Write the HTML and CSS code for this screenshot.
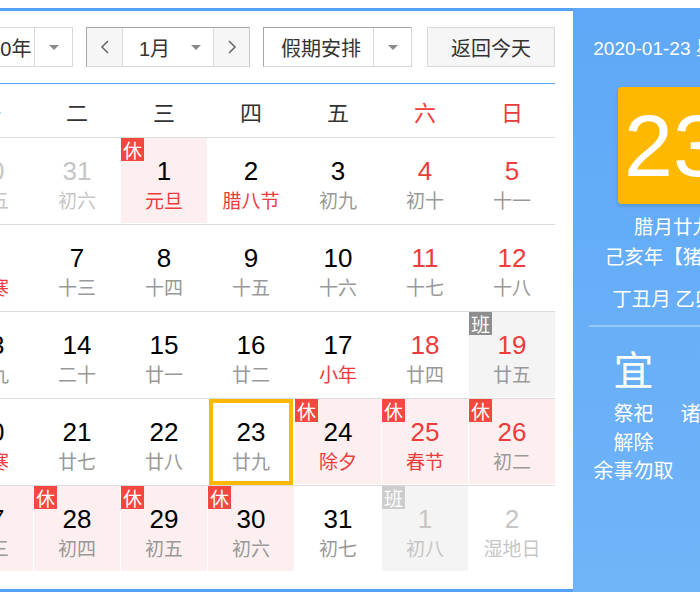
FILE: index.html
```html
<!DOCTYPE html>
<html lang="zh-CN">
<head>
<meta charset="utf-8">
<title>万年历</title>
<link rel="stylesheet" href="styles.css">
</head>
<body>
<div class="page">
  <div class="widget">
    <div class="main">
      <div class="toolbar">
        <div class="select year">
          <span class="sel-text">2020年</span>
          <span class="sel-arrow"><i class="tri"></i></span>
        </div>
        <div class="month-group">
          <span class="nav"><svg width="10" height="14" viewBox="0 0 10 14"><polyline points="8,1 2,7 8,13" fill="none" stroke="#666" stroke-width="1.5"/></svg></span>
          <span class="month-sel"><span>1月</span><i class="tri"></i></span>
          <span class="nav"><svg width="10" height="14" viewBox="0 0 10 14"><polyline points="2,1 8,7 2,13" fill="none" stroke="#666" stroke-width="1.5"/></svg></span>
        </div>
        <div class="select holiday">
          <span class="sel-text">假期安排</span>
          <span class="sel-arrow"><i class="tri"></i></span>
        </div>
        <button class="today-btn">返回今天</button>
      </div>

      <div class="weekdays">
        <span>一</span><span>二</span><span>三</span><span>四</span><span>五</span><span class="wk-red">六</span><span class="wk-red">日</span>
      </div>

      <div class="weeks">
        <div class="week">
          <div class="day off"><span class="num">30</span><span class="lunar">初五</span></div>
          <div class="day off"><span class="num">31</span><span class="lunar">初六</span></div>
          <div class="day rest"><i class="badge">休</i><span class="num">1</span><span class="lunar fest">元旦</span></div>
          <div class="day"><span class="num">2</span><span class="lunar fest">腊八节</span></div>
          <div class="day"><span class="num">3</span><span class="lunar">初九</span></div>
          <div class="day weekend"><span class="num">4</span><span class="lunar">初十</span></div>
          <div class="day weekend"><span class="num">5</span><span class="lunar">十一</span></div>
        </div>
        <div class="week">
          <div class="day"><span class="num">6</span><span class="lunar fest">小寒</span></div>
          <div class="day"><span class="num">7</span><span class="lunar">十三</span></div>
          <div class="day"><span class="num">8</span><span class="lunar">十四</span></div>
          <div class="day"><span class="num">9</span><span class="lunar">十五</span></div>
          <div class="day"><span class="num">10</span><span class="lunar">十六</span></div>
          <div class="day weekend"><span class="num">11</span><span class="lunar">十七</span></div>
          <div class="day weekend"><span class="num">12</span><span class="lunar">十八</span></div>
        </div>
        <div class="week">
          <div class="day"><span class="num">13</span><span class="lunar">十九</span></div>
          <div class="day"><span class="num">14</span><span class="lunar">二十</span></div>
          <div class="day"><span class="num">15</span><span class="lunar">廿一</span></div>
          <div class="day"><span class="num">16</span><span class="lunar">廿二</span></div>
          <div class="day"><span class="num">17</span><span class="lunar fest">小年</span></div>
          <div class="day weekend"><span class="num">18</span><span class="lunar">廿四</span></div>
          <div class="day weekend work"><i class="badge ban">班</i><span class="num">19</span><span class="lunar">廿五</span></div>
        </div>
        <div class="week">
          <div class="day"><span class="num">20</span><span class="lunar fest">大寒</span></div>
          <div class="day"><span class="num">21</span><span class="lunar">廿七</span></div>
          <div class="day"><span class="num">22</span><span class="lunar">廿八</span></div>
          <div class="day today"><span class="num">23</span><span class="lunar">廿九</span></div>
          <div class="day rest"><i class="badge">休</i><span class="num">24</span><span class="lunar fest">除夕</span></div>
          <div class="day rest weekend"><i class="badge">休</i><span class="num">25</span><span class="lunar fest">春节</span></div>
          <div class="day rest weekend"><i class="badge">休</i><span class="num">26</span><span class="lunar">初二</span></div>
        </div>
        <div class="week">
          <div class="day rest"><i class="badge">休</i><span class="num">27</span><span class="lunar">初三</span></div>
          <div class="day rest"><i class="badge">休</i><span class="num">28</span><span class="lunar">初四</span></div>
          <div class="day rest"><i class="badge">休</i><span class="num">29</span><span class="lunar">初五</span></div>
          <div class="day rest"><i class="badge">休</i><span class="num">30</span><span class="lunar">初六</span></div>
          <div class="day"><span class="num">31</span><span class="lunar">初七</span></div>
          <div class="day off work"><i class="badge ban-off">班</i><span class="num">1</span><span class="lunar">初八</span></div>
          <div class="day off"><span class="num">2</span><span class="lunar">湿地日</span></div>
        </div>
      </div>
    </div>

    <div class="side">
      <div class="side-date">2020-01-23 星期四</div>
      <div class="big-day">23</div>
      <div class="lunar-line">腊月廿九</div>
      <div class="lunar-line">己亥年【猪年】</div>
      <div class="lunar-line gz">丁丑月 乙卯日</div>
      <div class="side-sep"></div>
      <div class="almanac">
        <div class="alm-col">
          <div class="alm-head">宜</div>
          <div class="alm-item">祭祀</div>
          <div class="alm-item">解除</div>
          <div class="alm-item">余事勿取</div>
        </div>
        <div class="alm-col">
          <div class="alm-head">忌</div>
          <div class="alm-item">诸事不宜</div>
        </div>
      </div>
    </div>
  </div>
</div>
</body>
</html>
```

FILE: styles.css
```css
* { box-sizing: border-box; }

html, body {
  margin: 0;
  padding: 0;
  background: #fff;
  overflow: hidden;
}

body {
  font-family: "Liberation Sans", Arial, "Noto Sans CJK SC", sans-serif;
  color: #333;
}

.page {
  padding-top: 8px;
}

.widget {
  display: flex;
  margin-left: -73px;
  width: 846px;
}

.main {
  border: 3px solid #55a2f5;
  border-right: none;
  padding: 16px 18px 17px 17px;
  width: 646px;
}

/* toolbar */
.toolbar {
  display: flex;
  height: 40px;
  margin-bottom: 16px;
}

.select {
  display: flex;
  height: 40px;
  border: 1px solid #d9d9d9;
  background: #fff;
  font-size: 20px;
  color: #333;
}

.select .sel-text {
  flex: 1;
  display: flex;
  align-items: center;
}

.select .sel-arrow {
  width: 38px;
  border-left: 1px solid #d9d9d9;
  display: flex;
  align-items: center;
  justify-content: center;
}

.tri {
  display: block;
  width: 0;
  height: 0;
  border-left: 5px solid transparent;
  border-right: 5px solid transparent;
  border-top: 5px solid #8a8a8a;
}

.year {
  width: 126px;
}

.year .sel-text {
  padding-left: 19px;
}

.holiday {
  width: 149px;
  margin-left: 13px;
  border-color: #a6a6a6 #d6d6d6 #d6d6d6 #a6a6a6;
}

.holiday .sel-text {
  padding-left: 17px;
}

.month-group {
  display: flex;
  width: 164px;
  height: 40px;
  margin-left: 13px;
  border: 1px solid #d6d6d6;
  border-color: #a6a6a6 #c8c8c8 #d6d6d6 #a6a6a6;
}

.nav {
  width: 35px;
  background: #f6f6f6;
  display: flex;
  align-items: center;
  justify-content: center;
}

.month-sel {
  flex: 1;
  display: flex;
  align-items: center;
  justify-content: space-between;
  padding: 0 12px 0 16px;
  background: #fff;
  border-left: 1px solid #dcdcdc;
  border-right: 1px solid #dcdcdc;
  font-size: 20px;
  color: #333;
}

.today-btn {
  margin-left: auto;
  width: 128px;
  height: 40px;
  background: #f6f6f6;
  border: 1px solid #d9d9d9;
  font-family: "Liberation Sans", "Noto Sans CJK SC", sans-serif;
  font-size: 20px;
  color: #333;
  padding: 0;
}

/* weekday header */
.weekdays {
  display: grid;
  grid-template-columns: repeat(7, 86px);
  column-gap: 1px;
  height: 54px;
  border-top: 1px solid #55a2f5;
  align-items: center;
  font-family: "Noto Sans CJK SC", sans-serif;
  font-size: 22px;
  line-height: 30px;
  color: #333;
  text-align: center;
}

.wk-red {
  color: #ee3b3b;
}

/* weeks */
.week {
  display: grid;
  grid-template-columns: repeat(7, 86px);
  column-gap: 1px;
  border-top: 1px solid #dcdcdc;
  padding-bottom: 1px;
}

.day {
  position: relative;
  height: 85px;
  padding-top: 18px;
  display: flex;
  flex-direction: column;
  align-items: center;
}

.num {
  font-family: "Liberation Sans", Arial, sans-serif;
  font-size: 26px;
  line-height: 30px;
  color: #000;
}

.lunar {
  font-family: "Noto Sans CJK SC", sans-serif;
  font-size: 19px;
  line-height: 28px;
  color: #999;
}

.lunar.fest {
  color: #ee3b3b;
}

.weekend .num {
  color: #ee3b3b;
}

.off .num,
.off .lunar {
  color: #c6c6c6;
}

.rest {
  background: #fdefef;
}

.work {
  background: #f4f4f4;
}

.badge {
  position: absolute;
  top: 0;
  left: 0;
  width: 23px;
  height: 23px;
  background: #f4473f;
  color: #fff;
  font-style: normal;
  font-family: "Noto Sans CJK SC", sans-serif;
  font-size: 19px;
  line-height: 23px;
  text-align: center;
}

.badge.ban {
  background: #8e8e8e;
}

.badge.ban-off {
  background: #cdcdcd;
}

.today::after {
  content: "";
  position: absolute;
  top: 0;
  left: 1px;
  right: 1px;
  bottom: -1px;
  border: 4px solid #ffb800;
}

/* side panel */
.side {
  width: 200px;
  background: linear-gradient(#5fa8f7, #70b4f9);
  color: #fff;
  display: flex;
  flex-direction: column;
  align-items: center;
  padding-top: 29px;
  font-family: "Liberation Sans", Arial, "Noto Sans CJK SC", sans-serif;
}

.side-date {
  font-size: 19px;
  line-height: 24px;
  white-space: nowrap;
}

.big-day {
  margin-top: 26px;
  width: 110px;
  height: 117px;
  background: #ffb800;
  border-radius: 4px;
  box-shadow: 0 2px 4px rgba(0, 0, 0, 0.15);
  font-size: 88px;
  line-height: 117px;
  text-align: center;
  color: #fff;
}

.lunar-line {
  font-family: "Noto Sans CJK SC", sans-serif;
  font-size: 19.5px;
  line-height: 30px;
  white-space: nowrap;
}

.lunar-line:first-of-type {
  margin-top: 7px;
}

.big-day + .lunar-line {
  margin-top: 7px;
}

.lunar-line.gz {
  margin-top: 12px;
}

.side-sep {
  margin-top: 12px;
  width: 168px;
  height: 2px;
  background: rgba(255, 255, 255, 0.3);
}

.almanac {
  align-self: flex-start;
  margin-left: 17px;
  margin-top: 17px;
  display: grid;
  grid-template-columns: 87px 87px;
  font-family: "Noto Sans CJK SC", sans-serif;
}

.alm-col {
  text-align: center;
}

.alm-head {
  font-size: 40px;
  line-height: 48px;
  margin-bottom: 7px;
}

.alm-item {
  font-size: 20px;
  line-height: 28.5px;
  white-space: nowrap;
}
```
